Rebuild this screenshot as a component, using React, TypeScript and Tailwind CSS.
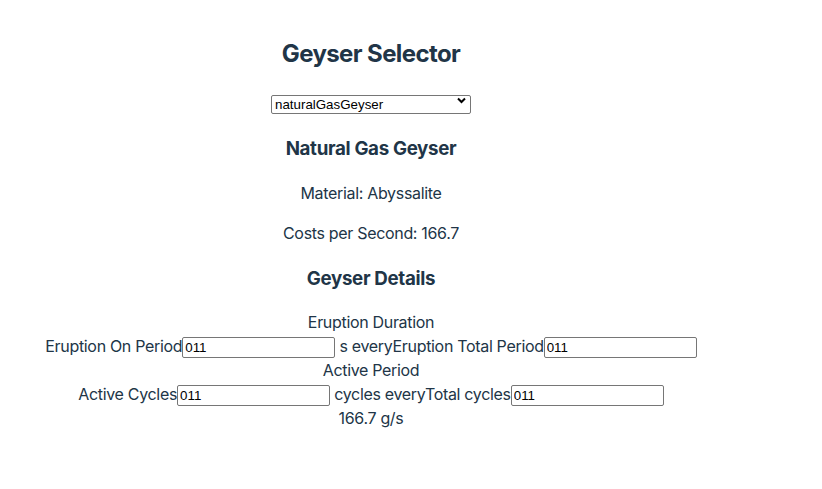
import { type FC } from "react";

const NumInput: FC = () => (
  <input
    type="text"
    defaultValue="011"
    className="w-[153px] h-[21px] align-middle border border-[#767676] rounded-[2px] bg-white px-[2px] text-[13.33px] tracking-normal text-black font-['Liberation_Sans',Arial,sans-serif]"
  />
);

const App: FC = () => {
  return (
    <div className="w-[742px] text-center text-[#213547] font-['Inter',sans-serif] text-base leading-6 tracking-[-0.02em] pt-[36px]">
      <h2 className="text-2xl font-bold leading-[36px] tracking-[-0.025em]">Geyser Selector</h2>

      <div className="mt-[19px] flex justify-center">
        <div className="relative w-[200px] h-[19px]">
          <select
            defaultValue="naturalGasGeyser"
            className="appearance-none w-full h-full border border-[#767676] rounded-[2px] bg-white pl-[3px] py-0 text-left text-[13.33px] leading-[17px] tracking-normal text-black font-['Liberation_Sans',Arial,sans-serif]"
          >
            <option value="naturalGasGeyser">naturalGasGeyser</option>
            <option value="coolSteamVent">coolSteamVent</option>
            <option value="waterGeyser">waterGeyser</option>
          </select>
          <svg
            className="absolute right-[5px] top-[6px] pointer-events-none"
            width="9"
            height="7"
            viewBox="0 0 9 7"
          >
            <path d="M1 1.5 L4.5 5 L8 1.5" fill="none" stroke="#000" strokeWidth="2" />
          </svg>
        </div>
      </div>

      <h3 className="mt-[24px] text-[18.72px] font-bold leading-[30px]">Natural Gas Geyser</h3>
      <p className="mt-[17px]">Material: Abyssalite</p>
      <p className="mt-[16px]">Costs per Second: 166.7</p>

      <h3 className="mt-[19px] text-[18.72px] font-bold leading-[30px]">Geyser Details</h3>

      <div className="mt-[16px]">
        <div>Eruption Duration</div>
        <div>
          Eruption On Period<NumInput /> s everyEruption Total Period<NumInput />
        </div>
        <div>Active Period</div>
        <div>
          Active Cycles<NumInput /> cycles everyTotal cycles<NumInput />
        </div>
        <div>166.7 g/s</div>
      </div>
    </div>
  );
};

export default App;
